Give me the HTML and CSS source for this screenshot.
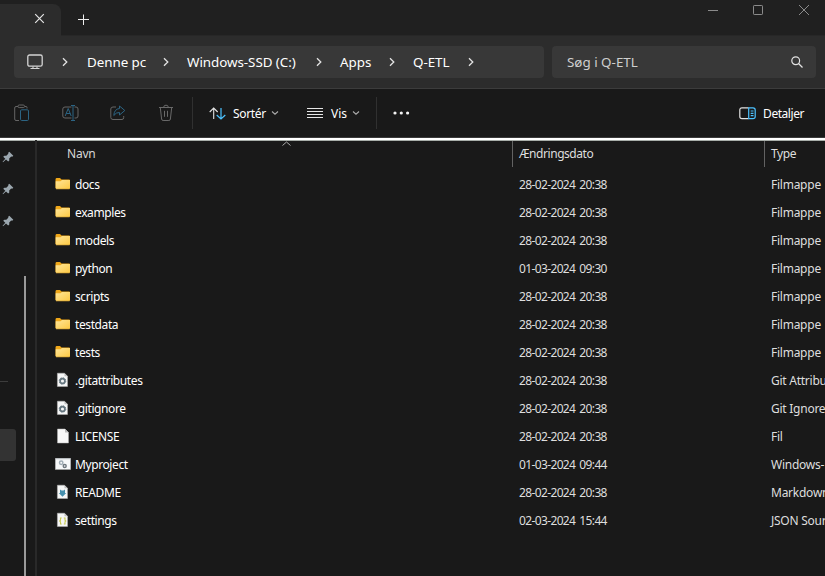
FILE: index.html
```html
<!DOCTYPE html>
<html lang="da">
<head>
<meta charset="utf-8">
<title>Q-ETL</title>
<link rel="stylesheet" href="styles.css">
</head>
<body>
<svg class="defs" aria-hidden="true">
  <defs>
    <linearGradient id="gold" x1="0" y1="0" x2="1" y2="1"><stop offset="0" stop-color="#ffe69a"/><stop offset="1" stop-color="#fdc943"/></linearGradient>
    <symbol id="folder" viewBox="0 0 16 16"><path d="M.5 3.500Q.5 2 1.500 2H5l1.500 1.500H14q1 0 1 1V12H.5z" fill="#efa719"/><path d="M.7 5.300H5.500L7 4H15v8.200q0 .8-.8.800H1.500q-.8 0-.8-.8z" fill="url(#gold)"/><path d="M1 13H14.500" stroke="#c8952a" stroke-width=".6"/></symbol>
    <symbol id="page" viewBox="0 0 16 16"><path d="M2.500 1H10l3.500 3.500V15h-11z" fill="#f8f8f8" stroke="#b5b5b5" stroke-width=".5"/><path d="M10 1v3.500h3.500z" fill="#bcbcbc"/></symbol>
    <symbol id="smallpage" viewBox="0 0 16 16"><path d="M2.400 1.200H9.500l3 3V14.500H2.400z" fill="#f5f6f6" stroke="#b5b5b5" stroke-width=".5"/><path d="M9.500 1.200v3h3z" fill="#bcbcbc"/></symbol>
    <symbol id="gear" viewBox="0 0 16 16"><use href="#smallpage"/><circle cx="7.500" cy="9" r="2.400" fill="none" stroke="#65767f" stroke-width="1.700"/><circle cx="7.500" cy="9" r="3.300" fill="none" stroke="#65767f" stroke-width=".9" stroke-dasharray="1.300 1.290"/></symbol>
    <symbol id="batch" viewBox="0 0 16 16"><path d="M.3 2.500h15.400v11H.3z" fill="#f7f8f9" stroke="#aaa" stroke-width=".6"/><path d="M.5 2.800h15" stroke="#c4c9ce"/><circle cx="6.200" cy="6.700" r="1.700" fill="none" stroke="#a1adb6" stroke-width="1.500"/><circle cx="9.700" cy="10" r="1.500" fill="none" stroke="#707980" stroke-width="1.400"/></symbol>
    <symbol id="markdown" viewBox="0 0 16 16"><use href="#smallpage"/><path d="M5 5.500l1.500 1h2l1.500-1v3.500h1.200L7.500 12.700 3.800 9H5z" fill="#4690ae"/></symbol>
    <symbol id="json" viewBox="0 0 16 16"><use href="#smallpage"/><path d="M6.700 6H5.500v2.200l-.8.800.8.800V12h1.200M8.800 6H10v2.200l.8.800-.8.800V12H8.800" fill="none" stroke="#c9ca54" stroke-width="1.100"/></symbol>
    <symbol id="pin" viewBox="0 0 12 12"><path d="M7.300.8l4 4-1.100 1-1-.2-2 2 .1 1.900-1.100 1.100L4 8.500 1 11.200l-.4-.4L3.300 7.800 1.200 5.700l1.200-1 1.900.1 2-2-.1-1z" fill="#9ba7af"/></symbol>
    <symbol id="chev" viewBox="0 0 8 10"><path d="M2 1.200L5.800 5 2 8.800" fill="none" stroke="#e4e4e4" stroke-width="1.300"/></symbol>
    <symbol id="down" viewBox="0 0 8 6"><path d="M1 1.500l3 2.700 3-2.700" fill="none" stroke="#aaa" stroke-width="1.100"/></symbol>
  </defs>
</svg>

<div class="window">
  <header class="titlebar">
    <div class="tab"><svg width="11" height="11" viewBox="0 0 11 11"><path d="M1.200 1.200l8.600 8.600M9.800 1.200L1.200 9.800" stroke="#e6e6e6" stroke-width="1.200"/></svg></div>
    <svg class="newtab" width="12" height="12" viewBox="0 0 12 12"><path d="M5.500.5v10.500M0 5.500h11" stroke="#eee"/></svg>
    <div class="controls">
      <svg width="12" height="12" viewBox="0 0 12 12"><path d="M2 6.500h10" stroke="#8b8b8b"/></svg>
      <svg width="12" height="12" viewBox="0 0 12 12"><rect x="1.500" y="1.500" width="9" height="9" rx=".7" fill="none" stroke="#8b8b8b"/></svg>
      <svg width="12" height="12" viewBox="0 0 12 12"><path d="M1 1l10 10M11 1L1 11" stroke="#8b8b8b"/></svg>
    </div>
  </header>

  <nav class="navbar">
    <div class="address">
      <svg class="pc" width="16" height="16" viewBox="0 0 16 16" fill="none" stroke="#d4d4d4"><rect x=".8" y="1" width="14.400" height="11.200" rx="1.800" stroke-width="1.300"/><path d="M6 12.500v2M10 12.500v2M3.500 14.500h9" stroke-width="1.100"/></svg>
      <svg class="sep s1"><use href="#chev"/></svg>
      <span class="crumb c1">Denne pc</span>
      <svg class="sep"><use href="#chev"/></svg>
      <span class="crumb c2">Windows-SSD (C:)</span>
      <svg class="sep"><use href="#chev"/></svg>
      <span class="crumb c3">Apps</span>
      <svg class="sep"><use href="#chev"/></svg>
      <span class="crumb c4">Q-ETL</span>
      <svg class="sep"><use href="#chev"/></svg>
    </div>
    <div class="search"><span>Søg i Q-ETL</span>
      <svg width="12" height="12" viewBox="0 0 12 12" fill="none" stroke="#e2e2e2" stroke-width="1.200"><circle cx="4.700" cy="4.700" r="3.900"/><path d="M7.500 7.500l4 4"/></svg>
    </div>
  </nav>

  <div class="toolbar">
    <div class="actions">
      <svg width="16" height="18" viewBox="0 0 16 18" fill="none"><path d="M4 2.500H2Q.7 2.500.7 4v11q0 1.500 1.300 1.500h3M11 2.500h1q1 0 1 1v1" stroke="#666"/><rect x="4" y="1" width="6.500" height="2.600" rx="1.200" stroke="#666"/><rect x="6.500" y="5.800" width="8" height="10.700" rx="1.200" stroke="#2c6483"/></svg>
      <svg width="17" height="18" viewBox="0 0 17 18" fill="none"><path d="M9.500 3H3Q.8 3 .8 5v7q0 2 2.200 2h6.500M12.500 3H14q2 0 2 2v7q0 2-2 2h-1.500" stroke="#666"/><path d="M3.200 12l3-7.500 3 7.500M4.200 9.500h4M11 1.500v15M9 1.500h4M9 16.500h4" stroke="#2c6483"/></svg>
      <svg width="16" height="18" viewBox="0 0 16 18" fill="none"><path d="M6 3H3Q.8 3 .8 5v8.500q0 2 2.200 2h9q1.700 0 1.700-2V12" stroke="#666"/><path d="M9.500 2l5.300 4.500-5.300 4.500V8.500Q6 8.200 3.800 11.500 4.200 5 9.500 4.500z" stroke="#2c6483" stroke-linejoin="round"/></svg>
      <svg width="16" height="18" viewBox="0 0 16 18" fill="none" stroke="#696969"><path d="M1 3.500h14M5.700 3.200q0-2 2.300-2t2.300 2M2.300 3.500l1.300 11.500q.2 1.500 1.500 1.500h5.800q1.300 0 1.500-1.500l1.300-11.500M6.500 6.800v6M9.500 6.800v6"/></svg>
    </div>
    <div class="tool sort">
      <svg width="17" height="13" viewBox="0 0 17 13" fill="none"><path d="M4.700 12V1M.7 5l4-4 4 4" stroke="#e3e3e3" stroke-width="1.100"/><path d="M12 1v11M7.700 8l4.300 4 4.300-4" stroke="#4cc2ff" stroke-width="1.200"/></svg>
      <span>Sortér</span><svg class="down"><use href="#down"/></svg>
    </div>
    <div class="tool view">
      <svg width="16" height="12" viewBox="0 0 16 12"><path d="M0 1.500h16M0 4.500h16M0 7.500h16M0 10.500h16" stroke="#e6e6e6"/></svg>
      <span>Vis</span><svg class="down"><use href="#down"/></svg>
    </div>
    <svg class="more" width="17" height="4" viewBox="0 0 17 4" fill="#f4f4f4"><circle cx="2" cy="2" r="1.600"/><circle cx="8.300" cy="2" r="1.600"/><circle cx="14.600" cy="2" r="1.600"/></svg>
    <div class="details">
      <svg width="17" height="13" viewBox="0 0 17 13" fill="none"><path d="M9.500.8H3Q.8.800.8 3v6.500q0 2.200 2.200 2.200h6.500" stroke="#e1e1e1" stroke-width="1.200"/><path d="M9.700.8H14q2.200 0 2.200 2.200v6.500q0 2.200-2.200 2.200H9.700zM11.700 4h2.800M11.700 6.300h2.800M11.700 8.600h2.800" stroke="#4cc2ff" stroke-width="1.200"/></svg>
      <span>Detaljer</span>
    </div>
  </div>

  <main class="content">
    <aside class="sidebar">
      <div class="tree">
        <svg class="pin"><use href="#pin"/></svg>
        <svg class="pin"><use href="#pin"/></svg>
        <svg class="pin"><use href="#pin"/></svg>
        <div class="rule"></div>
        <div class="selected"></div>
      </div>
      <div class="scrollbar"></div>
    </aside>
    <section class="files">
      <div class="row head"><span class="name">Navn</span><span class="date">Ændringsdato</span><span class="type">Type</span>
        <svg class="asc" width="9" height="5" viewBox="0 0 9 5"><path d="M.5 4.500l4-3.500 4 3.500" fill="none" stroke="#aaa"/></svg>
      </div>
      <div class="row"><svg><use href="#folder"/></svg><span class="name">docs</span><span class="date">28-02-2024 20:38</span><span class="type">Filmappe</span></div>
      <div class="row"><svg><use href="#folder"/></svg><span class="name">examples</span><span class="date">28-02-2024 20:38</span><span class="type">Filmappe</span></div>
      <div class="row"><svg><use href="#folder"/></svg><span class="name">models</span><span class="date">28-02-2024 20:38</span><span class="type">Filmappe</span></div>
      <div class="row"><svg><use href="#folder"/></svg><span class="name">python</span><span class="date">01-03-2024 09:30</span><span class="type">Filmappe</span></div>
      <div class="row"><svg><use href="#folder"/></svg><span class="name">scripts</span><span class="date">28-02-2024 20:38</span><span class="type">Filmappe</span></div>
      <div class="row"><svg><use href="#folder"/></svg><span class="name">testdata</span><span class="date">28-02-2024 20:38</span><span class="type">Filmappe</span></div>
      <div class="row"><svg><use href="#folder"/></svg><span class="name">tests</span><span class="date">28-02-2024 20:38</span><span class="type">Filmappe</span></div>
      <div class="row"><svg><use href="#gear"/></svg><span class="name">.gitattributes</span><span class="date">28-02-2024 20:38</span><span class="type">Git Attribu</span></div>
      <div class="row"><svg><use href="#gear"/></svg><span class="name">.gitignore</span><span class="date">28-02-2024 20:38</span><span class="type">Git Ignore</span></div>
      <div class="row"><svg><use href="#page"/></svg><span class="name caps">LICENSE</span><span class="date">28-02-2024 20:38</span><span class="type">Fil</span></div>
      <div class="row"><svg><use href="#batch"/></svg><span class="name">Myproject</span><span class="date">01-03-2024 09:44</span><span class="type">Windows-</span></div>
      <div class="row"><svg><use href="#markdown"/></svg><span class="name caps">README</span><span class="date">28-02-2024 20:38</span><span class="type">Markdown</span></div>
      <div class="row"><svg><use href="#json"/></svg><span class="name">settings</span><span class="date">02-03-2024 15:44</span><span class="type">JSON Sour</span></div>
    </section>
  </main>
</div>
</body>
</html>
```
FILE: styles.css
```css
* { box-sizing: border-box; }
body { margin: 0; background: #191919; color: #fff; font: 12px/16px "Noto Sans", "Open Sans", sans-serif; }
svg { display: block; flex: none; }
span { white-space: nowrap; }
.defs { position: absolute; width: 0; height: 0; }
.window { width: 825px; height: 576px; overflow: hidden; display: flex; flex-direction: column; }

.titlebar { height: 36px; flex: none; background: #202020; display: flex; border-bottom: 1px solid #272727; }
.tab { width: 61px; height: 32px; margin-top: 4px; padding: 9px 0 0 34px; background: #2c2c2c; border-radius: 0 8px 0 0; }
.newtab { margin: 14px 0 0 17px; }
.controls { display: flex; gap: 34px; margin: 4px 15px 0 auto; }

.navbar { height: 53px; flex: none; background: #2c2c2c; border-bottom: 1px solid #3c3c3c; padding: 10px 9px 0 14px; display: flex; gap: 8px; }
.address, .search { height: 32px; background: #383838; border-radius: 4px; display: flex; align-items: center; }
.address { width: 530px; padding-left: 13px; font-size: 13.400px; letter-spacing: -.05px; }
.search { width: 264px; padding: 0 13px 0 15px; justify-content: space-between; color: #cfcfcf; font-size: 13.400px; }
.sep { width: 8px; height: 10px; }
.s1 { margin: 0 18px 0 18px; }
.c1 { width: 75px; }
.c2 { width: 128px; margin-left: 17px; }
.c3 { width: 48px; margin-left: 17px; }
.c4 { width: 54px; margin-left: 17px; }

.toolbar { height: 49px; flex: none; display: flex; align-items: center; border-bottom: 1px solid #3a3a3a; padding-right: 21px; }
.toolbar span { padding-top: 2px; }
.actions { width: 193px; height: 32px; border-right: 1px solid #303030; display: flex; align-items: center; gap: 31.500px; padding-left: 14px; }
.tool { display: flex; align-items: center; }
.sort { padding-left: 16px; width: 114px; letter-spacing: -.35px; }
.sort span { width: 38px; margin-left: 7px; }
.view { width: 70px; height: 32px; border-right: 1px solid #303030; }
.view span { width: 21px; margin-left: 8px; }
.down { width: 8px; height: 6px; }
.more { margin-left: 16px; }
.details { display: flex; align-items: center; gap: 7px; margin-left: auto; letter-spacing: -.45px; }

.content { flex: 1; display: flex; border-top: 2px solid #fff; box-shadow: inset 0 1px #a8aea9; min-height: 0; }
.sidebar { width: 37px; flex: none; display: flex; border-right: 2px solid #292929; }
.tree { width: 16px; padding-top: 11px; }
.pin { width: 12px; height: 12px; margin: 0 0 20px 2px; }
.rule { width: 8px; height: 1px; background: #3c3c3c; margin-top: 154px; }
.selected { width: 16px; height: 32px; background: #333; border-radius: 0 3px 3px 0; margin-top: 47px; }
.pin + .rule { margin-top: 134px; border-top: 0; }
.tree { display: flex; flex-direction: column; }
.scrollbar { width: 2px; margin: 136px 0 0 8px; background: #9a9a9a; }

.files { flex: 1; padding-left: 18px; min-width: 0; }
.row { height: 28px; display: flex; align-items: center; color: #dedede; letter-spacing: -.25px; }
.row > svg:first-child { width: 16px; height: 16px; margin: 0 4px 2px 0; }
.row .name { width: 444px; color: #fff; letter-spacing: -.4px; }
.row .date { width: 252px; letter-spacing: -.63px; word-spacing: 1.500px; }
.row .type { width: 54px; }
.row .caps { letter-spacing: -.4px; }
.head { height: 27px; margin-bottom: 4px; position: relative; }
.head span { height: 26px; line-height: 26px; }
.head .name { width: 445px; margin-left: 12px; color: #d7d7d7; letter-spacing: -.2px; }
.head .date { width: 252px; border-left: 1px solid #626262; padding-left: 6px; letter-spacing: -.45px; }
.head .type { border-left: 1px solid #626262; padding-left: 6px; width: 61px; letter-spacing: -.4px; }
.asc { position: absolute; left: 227px; top: 1px; }
```
